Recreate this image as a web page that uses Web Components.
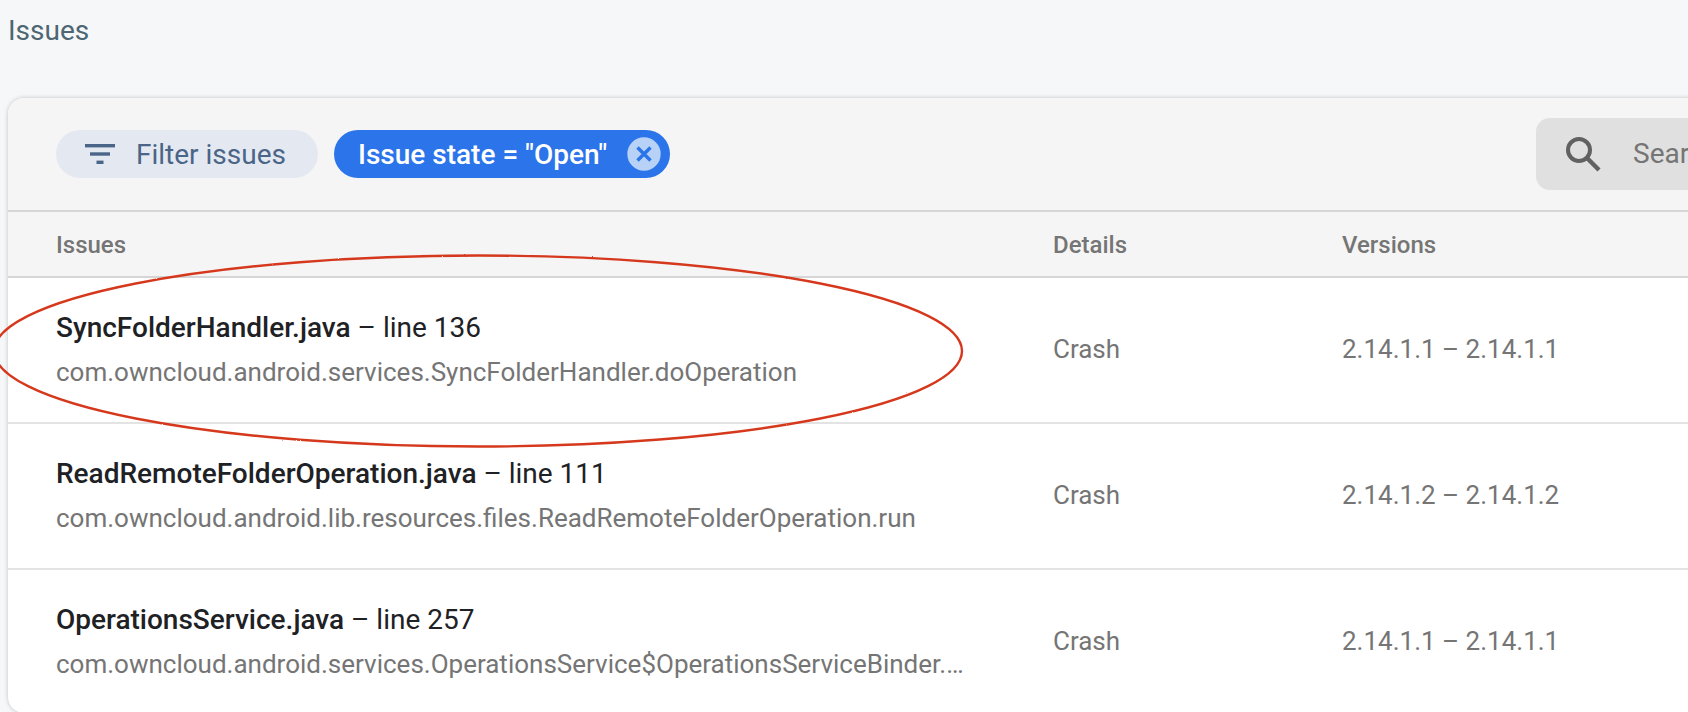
<!DOCTYPE html>
<html>
<head>
<meta charset="utf-8">
<style>
  html, body { margin: 0; height: 712px; overflow: hidden; background: #f6f7f9; }
  body { font-family: Roboto, "Liberation Sans", sans-serif; }
</style>
</head>
<body>
<issues-page>
  <issues-card>
    <filter-chip slot="filters">Filter issues</filter-chip>
    <state-chip slot="filters">Issue state = "Open"</state-chip>
    <search-box slot="search">Sear</search-box>
    <issue-row>
      <b slot="file">SyncFolderHandler.java</b><span slot="line">line 136</span>
      <span slot="method">com.owncloud.android.services.SyncFolderHandler.doOperation</span>
      <span slot="details">Crash</span><span slot="versions">2.14.1.1 – 2.14.1.1</span>
    </issue-row>
    <issue-row>
      <b slot="file">ReadRemoteFolderOperation.java</b><span slot="line">line 111</span>
      <span slot="method">com.owncloud.android.lib.resources.files.ReadRemoteFolderOperation.run</span>
      <span slot="details">Crash</span><span slot="versions">2.14.1.2 – 2.14.1.2</span>
    </issue-row>
    <issue-row>
      <b slot="file">OperationsService.java</b><span slot="line">line 257</span>
      <span slot="method">com.owncloud.android.services.OperationsService$OperationsServiceBinder.…</span>
      <span slot="details">Crash</span><span slot="versions">2.14.1.1 – 2.14.1.1</span>
    </issue-row>
  </issues-card>
  <hand-ellipse></hand-ellipse>
</issues-page>

<script>
  function define(name, html) {
    customElements.define(name, class extends HTMLElement {
      constructor() {
        super();
        this.attachShadow({ mode: "open" }).innerHTML = html;
      }
    });
  }

  define("issues-page", `
    <style>
      :host { display: block; position: relative; padding-left: 8px; }
      h1 { margin: 0; height: 98px; padding: 13px 0 0 0; box-sizing: border-box; font: 400 28px/36px Roboto, sans-serif; color: #4d6672; }
    </style>
    <h1>Issues</h1>
    <slot></slot>
  `);

  define("issues-card", `
    <style>
      :host { display: block; width: 1800px; height: 615px; overflow: hidden; background: #fff; border-radius: 16px; box-shadow: 0 0 4px rgba(0,0,0,.22); }
      .tools { display: flex; align-items: center; justify-content: space-between; height: 112px; padding-left: 48px; box-sizing: border-box; background: #f5f5f5; }
      .filters { display: flex; gap: 16px; }
      .search { width: 272px; display: block; }
      .head { display: grid; grid-template-columns: 997px 289px 1fr; align-items: center; height: 63px; padding: 1px 0 0 48px; background: #f5f5f5; border-top: 2px solid #d6d6d6; border-bottom: 2px solid #d6d6d6; font: 500 24px/30px Roboto, sans-serif; color: #757575; }
    </style>
    <div class="tools">
      <div class="filters"><slot name="filters"></slot></div>
      <div class="search"><slot name="search"></slot></div>
    </div>
    <div class="head"><span>Issues</span><span>Details</span><span>Versions</span></div>
    <slot></slot>
  `);

  define("filter-chip", `
    <style>
      :host { display: flex; align-items: center; gap: 21px; box-sizing: border-box; width: 262px; height: 48px; padding-left: 29px; border-radius: 24px; background: #e4e9f1; font: 400 28px/44px Roboto, sans-serif; color: #4a6587; }
      svg { display: block; }
      span { padding-top: 2px; }
    </style>
    <svg width="30" height="20" viewBox="0 0 30 20" fill="#4a6587"><rect width="30" height="3.4"/><rect x="5" y="8.3" width="20" height="3.4"/><rect x="11.5" y="16.6" width="7" height="3.4"/></svg>
    <span><slot></slot></span>
  `);

  define("state-chip", `
    <style>
      :host { display: flex; align-items: center; justify-content: space-between; box-sizing: border-box; width: 336px; height: 48px; padding: 0 9px 0 24px; border-radius: 24px; background: #2b74e9; font: 500 28px/44px Roboto, sans-serif; color: #fff; white-space: nowrap; }
      svg { display: block; }
      span { padding-top: 2px; }
    </style>
    <span><slot></slot></span>
    <svg width="34" height="34" viewBox="0 0 34 34"><circle cx="17" cy="17" r="16.7" fill="#b7d1f7"/><path d="M10.5 10.5l13 13M23.5 10.5l-13 13" stroke="#2b74e9" stroke-width="3.4" fill="none"/></svg>
  `);

  define("search-box", `
    <style>
      :host { display: flex; align-items: center; gap: 32px; box-sizing: border-box; height: 72px; padding-left: 29px; border-radius: 14px 0 0 14px; background: #e0e0e0; font: 400 28px/72px Roboto, sans-serif; color: #757575; }
      svg { display: block; flex: none; }
    </style>
    <svg width="36" height="36" viewBox="0 0 36 36" fill="none" stroke="#616161"><circle cx="14" cy="14" r="11" stroke-width="4"/><path d="M22 22l12 12" stroke-width="4.4"/></svg>
    <span><slot></slot></span>
  `);

  define("issue-row", `
    <style>
      :host { display: grid; grid-template-columns: 997px 289px 1fr; align-items: center; box-sizing: border-box; height: 146px; padding-left: 48px; border-bottom: 2px solid #e3e3e3; font: 400 26px/32px Roboto, sans-serif; color: #757575; }
      .text { padding-bottom: 2px; }
      .cell { margin-top: -2px; }
      .title { font-size: 28px; line-height: 36px; color: #202124; }
      .title ::slotted(b) { font-weight: 500; }
      .method { margin-top: 10px; font-size: 26px; line-height: 32px; white-space: nowrap; }
    </style>
    <div class="text">
      <div class="title"><slot name="file"></slot> – <slot name="line"></slot></div>
      <div class="method"><slot name="method"></slot></div>
    </div>
    <div class="cell"><slot name="details"></slot></div>
    <div class="cell"><slot name="versions"></slot></div>
  `);

  // red marker ring drawn over the first row
  define("hand-ellipse", `
    <style>
      :host { display: block; position: absolute; left: 0; top: 0; width: 1000px; height: 470px; pointer-events: none; }
      svg { display: block; overflow: visible; }
    </style>
    <svg width="1000" height="470" viewBox="0 0 1000 470" fill="none">
      <filter id="rough" x="-5%" y="-10%" width="110%" height="120%"><feTurbulence type="fractalNoise" baseFrequency="0.5" numOctaves="1" seed="3"/><feDisplacementMap in="SourceGraphic" scale="1.6"/></filter>
      <ellipse cx="478" cy="351" rx="484" ry="95.5" stroke="#d5391c" stroke-width="2.4" filter="url(#rough)"/>
    </svg>
  `);
</script>
</body>
</html>
